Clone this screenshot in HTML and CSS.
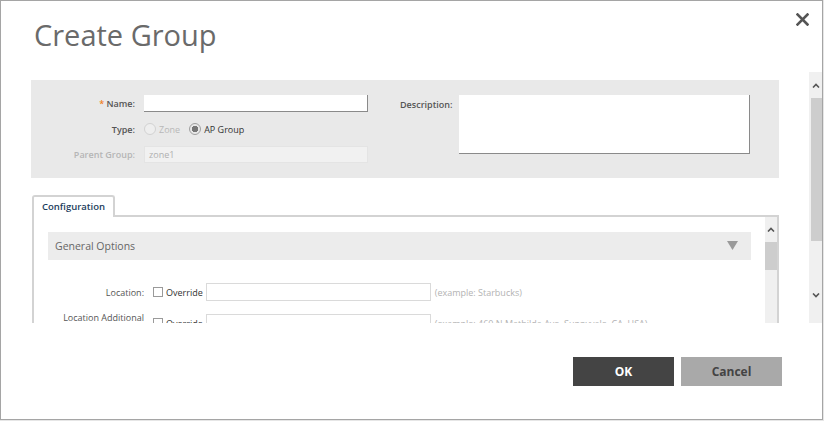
FILE: index.html
```html
<!DOCTYPE html>
<html lang="en">

<head>
    <meta charset="UTF-8">
    <title>Create Group</title>
    <link rel="stylesheet" href="styles.css">
</head>

<body>
    <div class="dialog">
        <button class="close-button" aria-label="Close">
            <svg width="13" height="13" viewBox="0 0 13 13">
                <path d="M1.5 1.5 L11.5 11.5 M11.5 1.5 L1.5 11.5" stroke="#555" stroke-width="2.6" stroke-linecap="square" fill="none" />
            </svg>
        </button>
        <h1 class="title">Create Group</h1>

        <div class="main">
            <div class="main-content">
                <div class="panel">
                    <div class="panel-left">
                        <div class="field">
                            <label class="field-label"><span class="required">*</span> Name:</label>
                            <div class="text-input"></div>
                        </div>
                        <div class="field field-type">
                            <label class="field-label">Type:</label>
                            <div class="radio-group">
                                <span class="radio radio-disabled"></span>
                                <span class="radio-text radio-text-disabled">Zone</span>
                                <span class="radio radio-checked"></span>
                                <span class="radio-text">AP Group</span>
                            </div>
                        </div>
                        <div class="field">
                            <label class="field-label field-label-disabled">Parent Group:</label>
                            <div class="text-input text-input-disabled">zone1</div>
                        </div>
                    </div>
                    <div class="panel-right">
                        <label class="field-label desc-label">Description:</label>
                        <div class="text-area"></div>
                    </div>
                </div>

                <div class="tabs">
                    <div class="tab">Configuration</div>
                </div>

                <div class="pane">
                    <div class="pane-content">
                        <div class="section-head">
                            <span>General Options</span>
                            <svg width="11" height="9" viewBox="0 0 11 9">
                                <path d="M0 0 L11 0 L5.5 9 Z" fill="#9a9a9a" />
                            </svg>
                        </div>

                        <div class="option-row">
                            <label class="option-label">Location:</label>
                            <span class="checkbox"></span>
                            <span class="option-text">Override</span>
                            <div class="option-input"></div>
                            <span class="example">(example: Starbucks)</span>
                        </div>
                        <div class="option-row">
                            <label class="option-label option-label-top">Location Additional Information:</label>
                            <span class="checkbox"></span>
                            <span class="option-text">Override</span>
                            <div class="option-input"></div>
                            <span class="example">(example: 460 N Mathilda Ave, Sunnyvale, CA, USA)</span>
                        </div>
                    </div>
                    <div class="scrollbar scrollbar-inner">
                        <div class="scroll-arrow">
                            <svg width="8" height="5" viewBox="0 0 8 5"><path d="M1 4.5 L4 1.5 L7 4.5" stroke="#555" stroke-width="1.6" fill="none" /></svg>
                        </div>
                        <div class="scroll-thumb"></div>
                    </div>
                </div>
            </div>

            <div class="scrollbar scrollbar-outer">
                <div class="scroll-arrow">
                    <svg width="8" height="5" viewBox="0 0 8 5"><path d="M1 4.5 L4 1.5 L7 4.5" stroke="#555" stroke-width="1.6" fill="none" /></svg>
                </div>
                <div class="scroll-thumb"></div>
                <div class="scroll-arrow scroll-arrow-down">
                    <svg width="8" height="5" viewBox="0 0 8 5"><path d="M1 0.5 L4 3.5 L7 0.5" stroke="#555" stroke-width="1.6" fill="none" /></svg>
                </div>
            </div>
        </div>

        <div class="footer">
            <button class="btn btn-ok">OK</button>
            <button class="btn btn-cancel">Cancel</button>
        </div>
    </div>
</body>

</html>
```

FILE: styles.css
```css
body {
    margin: 0;
    background-color: #e6e6e6;
    font-family: "Open Sans", "Liberation Sans", sans-serif;
}

.dialog {
    position: relative;
    width: 823px;
    height: 420px;
    box-sizing: border-box;
    border: 1px solid #a5a5a5;
    background-color: #fff;
    display: flex;
    flex-direction: column;
}

.close-button {
    position: absolute;
    top: 12px;
    right: 13px;
    padding: 0;
    border: none;
    background: none;
    cursor: pointer;
    line-height: 0;
}

.title {
    margin: 0;
    height: 71px;
    box-sizing: border-box;
    padding: 16px 0 0 33px;
    font-size: 29px;
    line-height: 36px;
    font-weight: 400;
    color: #6a6a6a;
}

/* scrolling body of the dialog */
.main {
    display: flex;
    height: 251px;
    flex-shrink: 0;
}

.main-content {
    width: 748px;
    margin-left: 30px;
    padding-top: 8px;
    overflow: hidden;
}

.panel {
    display: flex;
    height: 98px;
    box-sizing: border-box;
    padding-top: 15px;
    background-color: #e9e9e9;
}

.panel-left {
    display: flex;
    flex-direction: column;
    gap: 8px;
    width: 337px;
}

.field {
    display: flex;
    align-items: center;
    gap: 9px;
    height: 17px;
}

.field-type {
    height: 18px;
}

.field-label {
    width: 104px;
    text-align: right;
    font-size: 9px;
    font-weight: 600;
    color: #555;
}

.field-label-disabled {
    color: #b5b5b5;
}

.required {
    color: #f0821e;
}

.text-input {
    width: 224px;
    height: 17px;
    box-sizing: border-box;
    background-color: #fff;
    border-right: 1px solid #8a8a8a;
    border-bottom: 1px solid #8a8a8a;
}

.text-input-disabled {
    background-color: #f1f1f1;
    border: 1px solid #e4e4e4;
    padding-left: 4px;
    font-size: 9px;
    line-height: 15px;
    color: #b0b0b0;
}

.radio-group {
    display: flex;
    align-items: center;
}

.radio {
    width: 12px;
    height: 12px;
    box-sizing: border-box;
    border-radius: 50%;
    border: 1px solid #d2d2d2;
    background-color: #eee;
}

.radio-checked {
    margin-left: 9px;
    border-color: #a0a0a0;
    background: radial-gradient(circle, #777 0 3px, #e8e8e8 3.5px);
}

.radio-text {
    margin-left: 3px;
    font-size: 9px;
    color: #333;
}

.radio-text-disabled {
    color: #b8b8b8;
}

.panel-right {
    display: flex;
    align-items: flex-start;
    margin-left: 32px;
}

.desc-label {
    width: 59px;
    text-align: left;
    padding-top: 3px;
}

.text-area {
    width: 291px;
    height: 59px;
    box-sizing: border-box;
    background-color: #fff;
    border-right: 1px solid #8a8a8a;
    border-bottom: 1px solid #8a8a8a;
}

/* tab strip */
.tabs {
    display: flex;
    margin-top: 17px;
    margin-left: 1px;
    height: 20px;
}

.tab {
    position: relative;
    z-index: 1;
    width: 83px;
    height: 22px;
    box-sizing: border-box;
    border: 2px solid #d3d3d3;
    border-bottom: none;
    border-radius: 3px 3px 0 0;
    background-color: #fff;
    padding-left: 8px;
    font-size: 9.5px;
    font-weight: 600;
    line-height: 20px;
    color: #1c3d5c;
}

.pane {
    display: flex;
    margin-left: 1px;
    height: 160px;
    border: 2px solid #d3d3d3;
}

.pane-content {
    flex: 1;
    padding: 15px 14px 0 14px;
}

.section-head {
    display: flex;
    align-items: center;
    justify-content: space-between;
    height: 28px;
    padding: 0 13px 0 7px;
    background-color: #ececec;
    font-size: 10.5px;
    color: #666;
}

.section-head svg {
    margin-top: -1px;
}

.option-row {
    display: flex;
    align-items: center;
    margin-top: 23px;
    height: 18px;
}

.option-row + .option-row {
    margin-top: 13px;
}

.option-label {
    width: 96px;
    flex-shrink: 0;
    text-align: right;
    font-size: 9px;
    color: #555;
}

.option-label-top {
    align-self: flex-start;
    line-height: 10px;
    margin-top: -1px;
}

.checkbox {
    width: 10px;
    height: 10px;
    flex-shrink: 0;
    box-sizing: border-box;
    margin-left: 9px;
    border: 1px solid #9a9a9a;
    background-color: #fff;
}

.option-text {
    margin-left: 3px;
    font-size: 9px;
    color: #333;
}

.option-input {
    width: 225px;
    height: 18px;
    flex-shrink: 0;
    box-sizing: border-box;
    margin-left: 3px;
    border: 1px solid #dadada;
}

.example {
    margin-left: 4px;
    font-size: 9px;
    color: #b3b3b3;
    white-space: nowrap;
}

/* drawn scrollbars */
.scrollbar {
    display: flex;
    flex-direction: column;
    background-color: #f0f0f0;
}

.scroll-arrow {
    display: flex;
    justify-content: center;
    align-items: center;
}

.scroll-thumb {
    background-color: #cdcdcd;
}

.scrollbar-outer {
    width: 13px;
    margin-left: auto;
}

.scrollbar-outer .scroll-arrow {
    height: 26px;
}

.scrollbar-outer .scroll-thumb {
    height: 143px;
    margin-left: 2px;
}

.scrollbar-outer .scroll-arrow-down {
    margin-top: auto;
    height: 32px;
    align-items: flex-start;
    padding-top: 2px;
    box-sizing: border-box;
}

.scrollbar-inner {
    width: 12px;
}

.scrollbar-inner .scroll-arrow {
    height: 25px;
}

.scrollbar-inner .scroll-thumb {
    height: 28px;
}

/* buttons */
.footer {
    display: flex;
    justify-content: flex-end;
    gap: 7px;
    padding: 34px 40px 0 0;
}

.btn {
    width: 101px;
    height: 29px;
    border: none;
    font-family: "Open Sans", "Liberation Sans", sans-serif;
    font-size: 12px;
    font-weight: 700;
    cursor: pointer;
}

.btn-ok {
    background-color: #444;
    color: #fff;
}

.btn-cancel {
    background-color: #a9a9a9;
    color: #444;
}
```
